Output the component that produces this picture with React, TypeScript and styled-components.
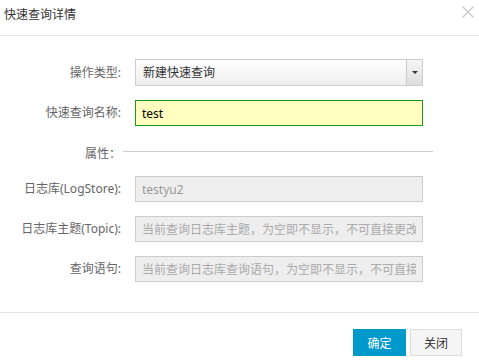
import React from "react";
import styled, { createGlobalStyle } from "styled-components";

const Global = createGlobalStyle`
  html, body { margin: 0; padding: 0; background: #fff; }
  body {
    font-family: "Noto Sans", "Noto Sans CJK SC", sans-serif;
    font-size: 12px;
    color: #333;
  }
  * { box-sizing: border-box; }
`;

const Dialog = styled.div`
  width: 479px;
  height: 360px;
  background: #fff;
  overflow: hidden;
`;

const Header = styled.div`
  height: 36px;
  border-bottom: 1px solid #e5e5e5;
  display: flex;
  justify-content: space-between;
  align-items: flex-start;
  padding: 0 5px 0 4px;
`;

const Title = styled.div`
  line-height: 30px;
  font-size: 12px;
  color: #333;
`;

const CloseBtn = styled.button`
  margin-top: 6px;
  width: 12px;
  height: 12px;
  padding: 0;
  border: none;
  background: none;
  display: flex;
  cursor: pointer;
`;

const Body = styled.div`
  padding: 23px 0 30px;
  border-bottom: 1px solid #e5e5e5;
  display: flex;
  flex-direction: column;
`;

const Row = styled.div<{ $mb?: number; $mt?: number }>`
  display: flex;
  align-items: center;
  gap: 14px;
  margin-top: ${(p) => p.$mt ?? 0}px;
  margin-bottom: ${(p) => p.$mb ?? 0}px;
`;

const Label = styled.label`
  width: 121px;
  flex: none;
  text-align: right;
  color: #666;
  font-size: 12px;
  line-height: 18px;
  white-space: nowrap;
`;

const SectionRow = styled.div`
  display: flex;
  align-items: flex-start;
  gap: 2px;
  margin-top: 19px;
  margin-bottom: 13px;
`;

const SectionLine = styled.div`
  width: 310px;
  height: 1px;
  margin-top: 6px;
  background: #ccc;
`;

const Select = styled.div`
  width: 288px;
  height: 27px;
  border: 1px solid #ccc;
  background: linear-gradient(#fff, #eee);
  display: flex;
  align-items: center;
`;

const SelectText = styled.span`
  flex: 1;
  padding-left: 7px;
  color: #333;
  line-height: 25px;
`;

const SelectArrow = styled.span`
  width: 16px;
  height: 100%;
  border-left: 1px solid #ccc;
  background: linear-gradient(#f6f6f6, #ddd);
  display: flex;
  align-items: center;
  justify-content: center;
  &::after {
    content: "";
    border-left: 3px solid transparent;
    border-right: 3px solid transparent;
    border-top: 3px solid #333;
  }
`;

const Input = styled.input<{ $active?: boolean }>`
  width: 288px;
  height: 26px;
  padding: 0 6px;
  font-family: inherit;
  font-size: 12px;
  outline: none;
  border: 1px solid ${(p) => (p.$active ? "#1a9a1a" : "#ccc")};
  background: ${(p) => (p.$active ? "#ffffc0" : "#eee")};
  color: ${(p) => (p.$active ? "#000" : "#999")};
  &::placeholder { color: #aaa; }
  &:disabled { color: #999; }
`;

const Footer = styled.div`
  display: flex;
  justify-content: flex-end;
  gap: 4px;
  padding: 16px 17px 0 0;
`;

const Button = styled.button<{ $primary?: boolean }>`
  height: 27px;
  width: ${(p) => (p.$primary ? 53 : 52)}px;
  font-family: inherit;
  font-size: 12px;
  border: 1px solid ${(p) => (p.$primary ? "#0099cc" : "#ddd")};
  background: ${(p) => (p.$primary ? "#0099cc" : "#f5f5f5")};
  color: ${(p) => (p.$primary ? "#fff" : "#333")};
  padding: 0;
  cursor: pointer;
`;

export default function App() {
  return (
    <>
      <Global />
      <Dialog>
        <Header>
          <Title>快速查询详情</Title>
          <CloseBtn aria-label="close">
            <svg width="12" height="12" viewBox="0 0 12 12">
              <path d="M0.5 0.5 L11.5 11.5 M11.5 0.5 L0.5 11.5" stroke="#c8c8c8" strokeWidth="1.2" />
            </svg>
          </CloseBtn>
        </Header>
        <Body>
          <Row $mb={14}>
            <Label>操作类型:</Label>
            <Select>
              <SelectText>新建快速查询</SelectText>
              <SelectArrow />
            </Select>
          </Row>
          <Row>
            <Label>快速查询名称:</Label>
            <Input $active defaultValue="test" />
          </Row>
          <SectionRow>
            <Label>属性：</Label>
            <SectionLine />
          </SectionRow>
          <Row $mb={14}>
            <Label>日志库(LogStore):</Label>
            <Input disabled defaultValue="testyu2" />
          </Row>
          <Row $mb={14}>
            <Label>日志库主题(Topic):</Label>
            <Input disabled placeholder="当前查询日志库主题，为空即不显示，不可直接更改" />
          </Row>
          <Row>
            <Label>查询语句:</Label>
            <Input disabled placeholder="当前查询日志库查询语句，为空即不显示，不可直接更改" />
          </Row>
        </Body>
        <Footer>
          <Button $primary>确定</Button>
          <Button>关闭</Button>
        </Footer>
      </Dialog>
    </>
  );
}
